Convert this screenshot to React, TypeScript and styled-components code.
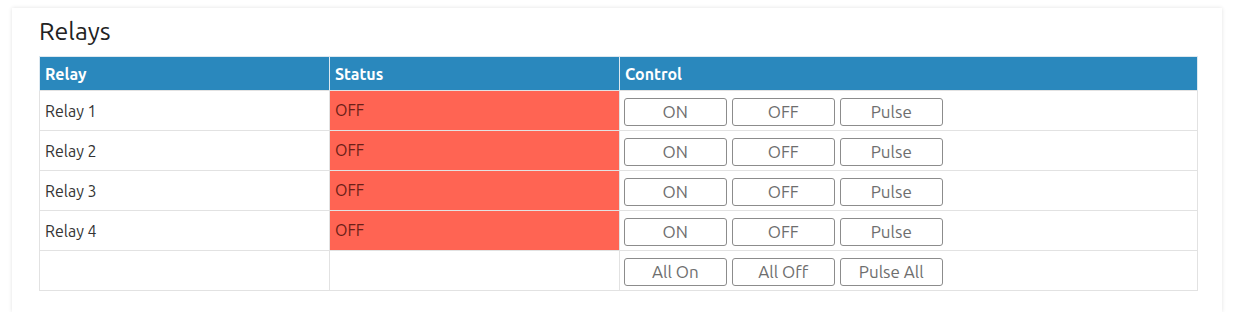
import * as React from 'react';
import styled, { createGlobalStyle } from 'styled-components';

const GlobalStyle = createGlobalStyle`
    body {
        margin: 0;
        background: #ffffff;
        font-family: Ubuntu, 'Open Sans', 'Liberation Sans', sans-serif;
    }
`;

const relays = ['Relay 1', 'Relay 2', 'Relay 3', 'Relay 4'];

const App = () => {
    return (
        <>
            <GlobalStyle />
            <Panel>
                <Title>Relays</Title>
                <Table>
                    <thead>
                        <tr>
                            <HeadCell $width={290}>Relay</HeadCell>
                            <HeadCell $width={290}>Status</HeadCell>
                            <HeadCell>Control</HeadCell>
                        </tr>
                    </thead>
                    <tbody>
                        {relays.map((name) => (
                            <tr key={name}>
                                <Cell>{name}</Cell>
                                <StatusCell $on={false}>OFF</StatusCell>
                                <ControlCell>
                                    <Controls>
                                        <Button>ON</Button>
                                        <Button>OFF</Button>
                                        <Button>Pulse</Button>
                                    </Controls>
                                </ControlCell>
                            </tr>
                        ))}
                        <tr>
                            <Cell />
                            <Cell />
                            <ControlCell>
                                <Controls>
                                    <Button>All On</Button>
                                    <Button>All Off</Button>
                                    <Button>Pulse All</Button>
                                </Controls>
                            </ControlCell>
                        </tr>
                    </tbody>
                </Table>
            </Panel>
        </>
    );
};

const Panel = styled.div`
    margin: 8px 0 0 12px;
    width: 1210px;
    height: 304px;
    box-sizing: border-box;
    padding: 4px 24px 0 27px;
    background: #ffffff;
    box-shadow: 0 0 4px rgba(0, 0, 0, 0.12);
`;

const Title = styled.h2`
    margin: 0 0 6px 0;
    height: 38px;
    line-height: 38px;
    font-size: 25px;
    font-weight: 400;
    color: #222;
`;

const Table = styled.table`
    width: 1159px;
    border-collapse: collapse;
    table-layout: fixed;
    font-size: 16px;
`;

const HeadCell = styled.th<{ $width?: number }>`
    ${({ $width }) => ($width ? `width: ${$width}px;` : '')}
    height: 34px;
    padding: 0 5px;
    box-sizing: border-box;
    background: #2a88bd;
    color: #ffffff;
    font-weight: 700;
    font-size: 16px;
    text-align: left;
    border: 1px solid #dce8f0;
    border-bottom: none;
`;

const Cell = styled.td`
    height: 40px;
    padding: 0 5px;
    box-sizing: border-box;
    color: #333;
    border: 1px solid #e2e2e2;
    vertical-align: middle;
`;

const StatusCell = styled(Cell)<{ $on: boolean }>`
    background: ${({ $on }) => ($on ? '#5cc46b' : '#ff6453')};
    color: ${({ $on }) => ($on ? '#1d4a24' : '#6a1f18')};
    padding-bottom: 2px;
`;

const ControlCell = styled(Cell)`
    padding: 2px 5px 0 4px;
`;

const Controls = styled.div`
    display: flex;
    gap: 5.5px;
`;

const Button = styled.button`
    width: 102.5px;
    height: 28px;
    padding: 0;
    box-sizing: border-box;
    background: #ffffff;
    border: 1px solid #8c8c8c;
    border-radius: 3px;
    color: #6e6e6e;
    font-family: Ubuntu, 'Open Sans', 'Liberation Sans', sans-serif;
    font-size: 17px;
`;

export default App;
